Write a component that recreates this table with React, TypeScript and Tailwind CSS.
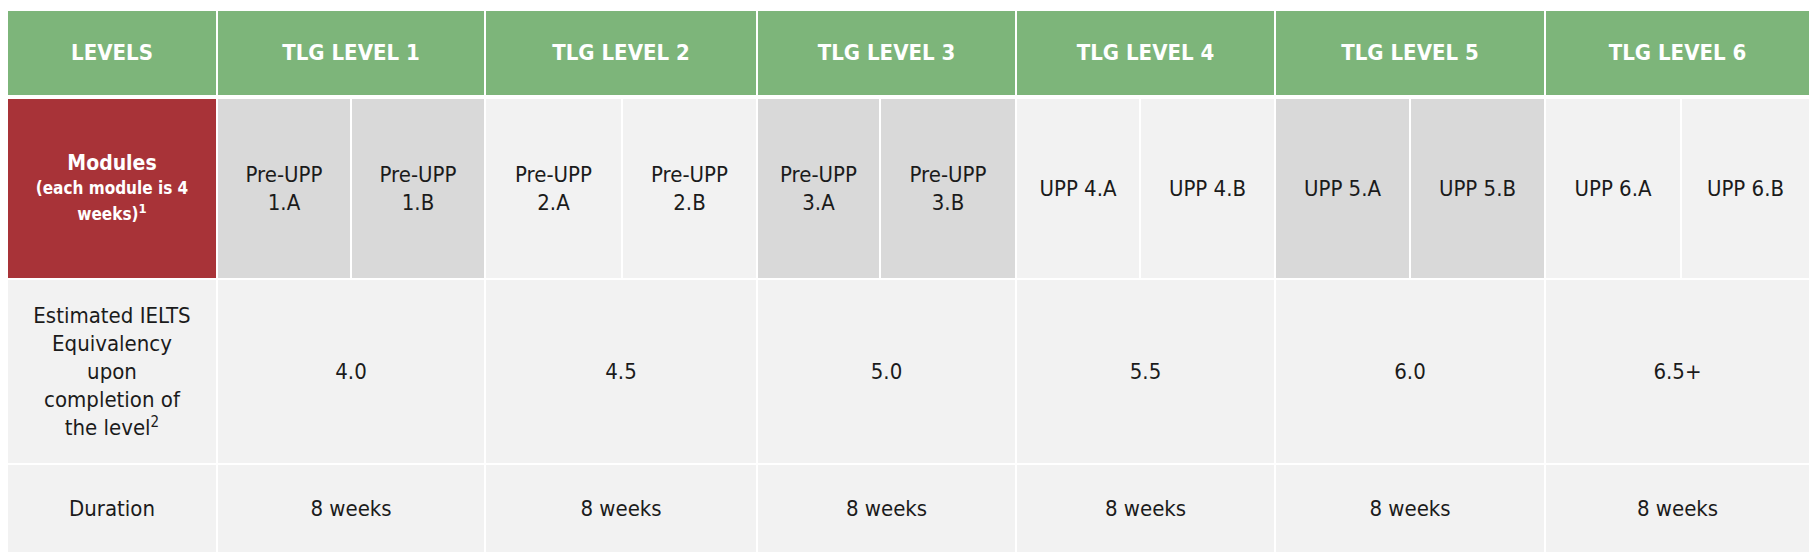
const levels = [
  { name: 'TLG LEVEL 1', modules: ['Pre-UPP 1.A', 'Pre-UPP 1.B'], ielts: '4.0', dark: true },
  { name: 'TLG LEVEL 2', modules: ['Pre-UPP 2.A', 'Pre-UPP 2.B'], ielts: '4.5', dark: false },
  { name: 'TLG LEVEL 3', modules: ['Pre-UPP 3.A', 'Pre-UPP 3.B'], ielts: '5.0', dark: true },
  { name: 'TLG LEVEL 4', modules: ['UPP 4.A', 'UPP 4.B'], ielts: '5.5', dark: false },
  { name: 'TLG LEVEL 5', modules: ['UPP 5.A', 'UPP 5.B'], ielts: '6.0', dark: true },
  { name: 'TLG LEVEL 6', modules: ['UPP 6.A', 'UPP 6.B'], ielts: '6.5+', dark: false }
];

const cell = 'flex items-center justify-center text-center';

export default function App() {
  return (
    <div
      className="min-h-[560px] w-[1816px] bg-white pl-[8px] pt-[11px] text-[22px] leading-[28px] text-[#1b1b1b]"
      style={{ fontFamily: '"DejaVu Sans Condensed", "Liberation Sans", sans-serif' }}
    >
      <div className="grid w-[1801px] grid-cols-[208px_132px_132px_135px_133px_121px_134px_122px_133px_133px_133px_134px_127px] grid-rows-[86px_179px_183px_87px] gap-x-[2px] gap-y-[2px]">
        {/* header */}
        <div className={`${cell} h-[84px] bg-[#7db57a] font-bold text-white`}>LEVELS</div>
        {levels.map((level) => (
          <div key={level.name} className={`${cell} col-span-2 h-[84px] bg-[#7db57a] font-bold text-white`}>
            {level.name}
          </div>
        ))}

        {/* modules */}
        <div className={`${cell} flex-col bg-[#a83338] px-3 font-bold text-white`}>
          <div className="text-[21px] leading-[24px]">Modules</div>
          <div className="text-[17px] leading-[26px]">
            (each module is 4
            <br />
            weeks)<sup className="text-[13px] leading-none">1</sup>
          </div>
        </div>
        {levels.map((level) =>
          level.modules.map((mod) => (
            <div key={mod} className={`${cell} px-4 ${level.dark ? 'bg-[#d9d9d9]' : 'bg-[#f2f2f2]'}`}>
              {mod}
            </div>
          ))
        )}

        {/* ielts */}
        <div className={`${cell} bg-[#f2f2f2]`}>
          <p>
            Estimated IELTS
            <br />
            Equivalency
            <br />
            upon
            <br />
            completion of
            <br />
            the level<sup className="text-[15px] leading-none">2</sup>
          </p>
        </div>
        {levels.map((level) => (
          <div key={level.name} className={`${cell} col-span-2 bg-[#f2f2f2]`}>
            {level.ielts}
          </div>
        ))}

        {/* duration */}
        <div className={`${cell} bg-[#f2f2f2]`}>Duration</div>
        {levels.map((level) => (
          <div key={level.name} className={`${cell} col-span-2 bg-[#f2f2f2]`}>
            8 weeks
          </div>
        ))}
      </div>
    </div>
  );
}
